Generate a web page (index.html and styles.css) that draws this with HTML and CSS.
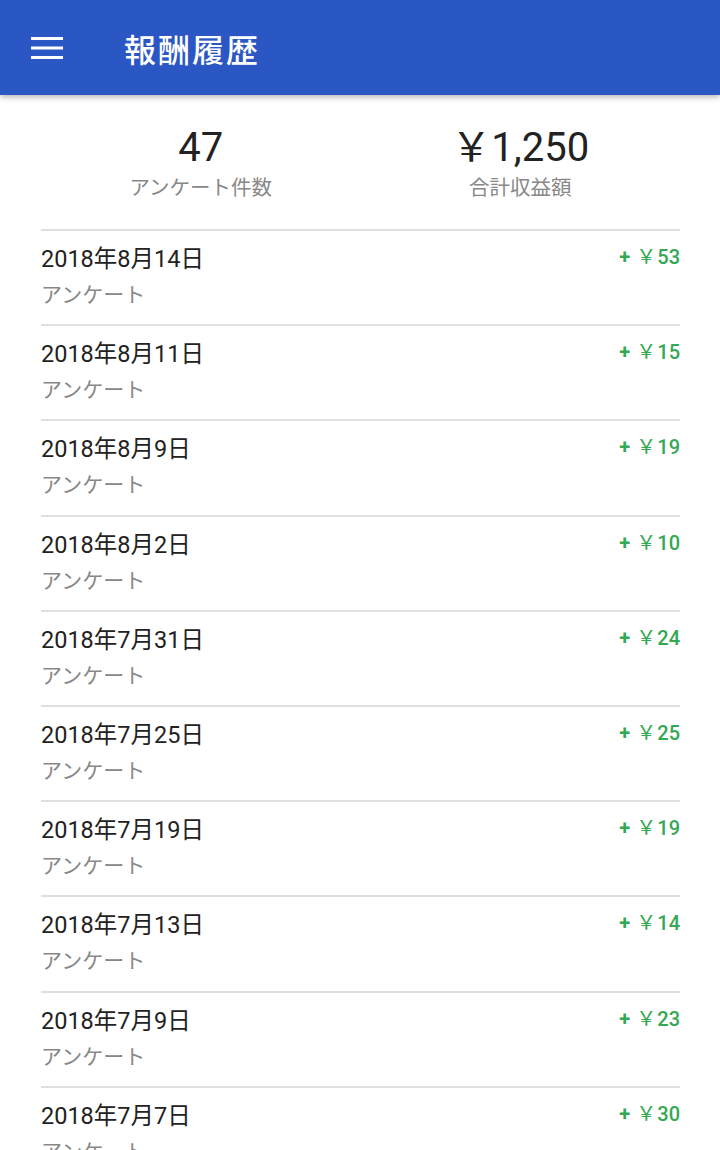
FILE: index.html
```html
<!DOCTYPE html>
<html lang="ja">
<head>
  <meta charset="UTF-8">
  <meta name="viewport" content="width=device-width, initial-scale=1.0">
  <title>報酬履歴</title>
  <link rel="stylesheet" href="styles.css">
</head>
<body>
  <header class="appbar">
    <button class="menu-btn" aria-label="メニュー">
      <svg width="32" height="24" viewBox="0 0 32 24"><rect x="0" y="1" width="32" height="3" fill="#fff"/><rect x="0" y="10.5" width="32" height="3" fill="#fff"/><rect x="0" y="20" width="32" height="3" fill="#fff"/></svg>
    </button>
    <h1>報酬履歴</h1>
  </header>
  <main class="content">
    <div class="summary">
      <div class="summary-item">
        <div class="summary-value">47</div>
        <div class="summary-label">アンケート件数</div>
      </div>
      <div class="summary-item">
        <div class="summary-value">￥1,250</div>
        <div class="summary-label">合計収益額</div>
      </div>
    </div>
    <ul class="history" id="history"></ul>
  </main>
  <script>
    const rows = [
      ['2018年8月14日', 53],
      ['2018年8月11日', 15],
      ['2018年8月9日', 19],
      ['2018年8月2日', 10],
      ['2018年7月31日', 24],
      ['2018年7月25日', 25],
      ['2018年7月19日', 19],
      ['2018年7月13日', 14],
      ['2018年7月9日', 23],
      ['2018年7月7日', 30]
    ];
    const list = document.getElementById('history');
    rows.forEach(([date, amount]) => {
      const li = document.createElement('li');
      li.className = 'row';
      li.innerHTML = '<div class="row-main"><div class="row-date">' + date + '</div><div class="row-type">アンケート</div></div>' +
        '<div class="row-amount"><span class="plus">+</span><span class="yen">￥</span>' + amount + '</div>';
      list.appendChild(li);
    });
  </script>
</body>
</html>
```

FILE: styles.css
```css
body { margin: 0; font-family: Roboto, "Noto Sans CJK JP", sans-serif; background: #fff; color: #212121; }
.appbar { height: 95px; background: #2b57c5; display: flex; align-items: center; box-shadow: 0 2px 6px rgba(0,0,0,0.3); position: relative; }
.menu-btn { background: none; border: 0; padding: 0; margin-left: 31px; width: 32px; height: 24px; display: flex; cursor: pointer; }
.appbar h1 { margin: 0 0 0 61px; color: #fff; font-size: 32px; font-weight: 500; letter-spacing: 2px; }
.content { padding: 0 40px 0 41px; }
.summary { display: grid; grid-template-columns: 1fr 1fr; padding: 29px 0 25px; text-align: center; }
.summary-value { font-size: 40px; line-height: 48px; font-weight: 400; color: #222; }
.summary-label { font-size: 20.5px; line-height: 32px; color: #888; }
.history { list-style: none; margin: 0; padding: 0; }
.row { box-sizing: border-box; height: 95.2px; border-top: 2px solid #e0e0e0; display: flex; justify-content: space-between; align-items: flex-start; padding-top: 12px; }
.row-date { font-size: 23.5px; line-height: 32px; color: #222; }
.row-type { font-size: 21px; line-height: 30px; margin-top: 5px; color: #888; }
.row-amount { font-size: 20px; line-height: 28px; font-weight: 500; color: #34a853; }
.row-amount .plus { font-weight: 700; margin-right: 6px; }
.row-amount .yen { font-weight: 400; margin-right: 1px; }
```
